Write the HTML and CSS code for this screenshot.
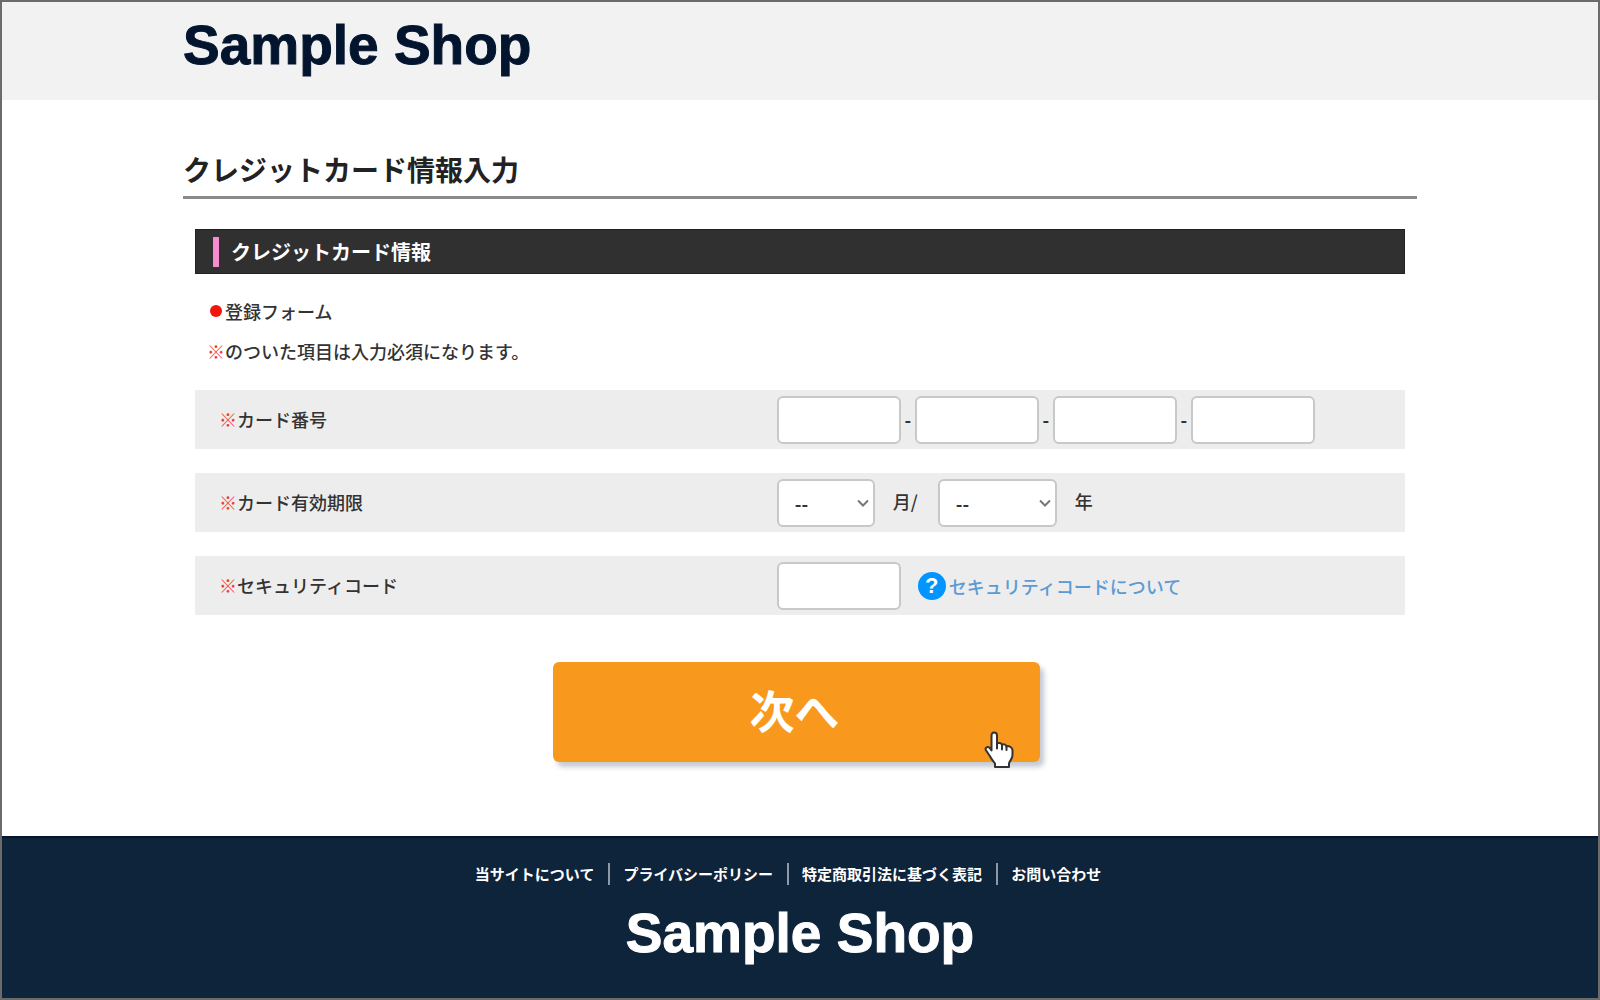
FILE: index.html
```html
<!DOCTYPE html>
<html lang="ja">
<head>
  <meta charset="UTF-8" />
  <title>クレジットカード情報入力 | Sample Shop</title>
  <meta name="viewport" content="width=device-width, initial-scale=1.0"/>
  <link rel="stylesheet" href="styles.css">
</head>
<body>
  <!-- ヘッダー -->
  <header class="header">
    <div class="inner"><div class="logo">Sample Shop</div></div>
  </header>

  <!-- メイン -->
  <main class="inner main">
    <h1 class="page-title">クレジットカード情報入力</h1>

    <form class="card-form" onsubmit="return false">
      <h2 class="section-title">クレジットカード情報</h2>

      <div class="notes">
        <p class="note"><span class="dot"></span>登録フォーム</p>
        <p class="note"><span class="req">※</span>のついた項目は入力必須になります。</p>
      </div>

      <div class="row">
        <label class="row-label" for="card1" id="cardLabel"><span class="req">※</span>カード番号</label>
        <div class="row-body">
          <input class="box" type="text" id="card1" maxlength="4" inputmode="numeric">
          <span class="hyphen">-</span>
          <input class="box" type="text" id="card2" maxlength="4" inputmode="numeric" aria-labelledby="cardLabel">
          <span class="hyphen">-</span>
          <input class="box" type="text" id="card3" maxlength="4" inputmode="numeric" aria-labelledby="cardLabel">
          <span class="hyphen">-</span>
          <input class="box" type="text" id="card4" maxlength="4" inputmode="numeric" aria-labelledby="cardLabel">
        </div>
      </div>

      <div class="row">
        <label class="row-label" for="month"><span class="req">※</span>カード有効期限</label>
        <div class="row-body">
          <span class="select-wrap">
            <select class="box select-month" id="month"><option>--</option></select>
            <svg class="chevron" viewBox="0 0 12 8"><path d="M1 1.5l5 5 5-5"/></svg>
          </span>
          <label class="unit" for="month">月/</label>
          <span class="select-wrap">
            <select class="box select-year" id="year"><option>--</option></select>
            <svg class="chevron" viewBox="0 0 12 8"><path d="M1 1.5l5 5 5-5"/></svg>
          </span>
          <label class="unit" for="year">年</label>
        </div>
      </div>

      <div class="row">
        <label class="row-label" for="code"><span class="req">※</span>セキュリティコード</label>
        <div class="row-body">
          <input class="box" type="text" id="code" maxlength="4" inputmode="numeric">
          <a class="help" href="#"><span class="help-icon">?</span>セキュリティコードについて</a>
        </div>
      </div>

      <div class="submit-row">
        <div class="submit-area">
          <button class="submit" type="submit">次へ</button>
          <svg class="pointer" viewBox="0 0 30 39">
            <path d="M10 2.500C11.800 2.500 13 3.700 13 5.500V14C13.500 12.600 17.500 12.500 18 15C19 13.800 22 14 22.500 16.500C24 15.500 28 16.500 28.500 20V25C28.500 29 25.500 31 25 33.500V37H11V33.500C9 31 7 28.500 5.500 25.500L1.800 20C0.800 17.500 3.800 16 5.500 17.700L7.500 20.500V5.500C7.500 3.700 8.500 2.500 10 2.500Z"/>
            <path d="M13 13.500V18.500M18 15V19.500M22.500 16.500V20"/>
          </svg>
        </div>
      </div>
    </form>
  </main>

  <!-- フッター -->
  <footer class="footer">
    <nav class="footer-nav">
      <a href="#">当サイトについて</a>
      <a href="#">プライバシーポリシー</a>
      <a href="#">特定商取引法に基づく表記</a>
      <a href="#">お問い合わせ</a>
    </nav>
    <div class="logo">Sample Shop</div>
  </footer>
</body>
</html>
```
FILE: styles.css
```css
/* ========== 共通 ========== */
*{box-sizing:border-box;}
body{
  margin:0;min-height:100vh;display:flex;flex-direction:column;
  border:2px solid #6b6b6b;background:#fff;color:#333;
  font-family:"Noto Sans CJK JP", sans-serif;font-size:18px;font-weight:500;line-height:24px;
}
h1,h2,p{margin:0;}
a{text-decoration:none;}
.inner{width:100%;max-width:1234px;margin:0 auto;}
.logo{
  font-family:"Liberation Sans", Arial, sans-serif;font-size:55px;font-weight:bold;line-height:60px;
  color:#03152e;-webkit-text-stroke:1px currentColor;
}
.req{color:#f33b32;}

/* ========== ヘッダー ========== */
.header{background:#f2f2f2;padding:13px 0 25px;}

/* ========== メイン ========== */
.main{flex:1 0 auto;padding-top:49px;}
.page-title{
  font-size:28px;line-height:40px;font-weight:700;color:#222;
  padding-bottom:7px;border-bottom:3px solid #8a8a8a;
}
.card-form{padding:30px 12px 0;}
.section-title{
  display:flex;align-items:center;gap:12px;height:45px;padding-left:17px;
  background:#303030;border:1px solid #222;color:#fff;font-size:20px;font-weight:700;
}
.section-title::before{content:"";width:6px;height:30px;background:#f78bd0;}
.notes{padding:25px 12px 27px;display:grid;gap:16px;}
.note{display:flex;align-items:center;}
.dot{width:12px;height:12px;margin:0 3px;border-radius:50%;background:#f4140c;}

/* 入力行 */
.row{display:flex;align-items:center;min-height:59px;margin-bottom:24px;background:#ededed;}
.row-label{width:48%;padding:0 0 2px 24px;}
.row-body{display:flex;align-items:center;padding-left:1px;}
.box{
  width:124px;height:48px;padding:0 16px;border:2px solid #c8c8c8;border-radius:6px;
  background:#fff;color:#333;font:inherit;
}
.hyphen{width:14px;padding-bottom:2px;text-align:center;font-weight:700;}
.select-wrap{position:relative;display:flex;}
.select-wrap .box{appearance:none;font-weight:700;}
.box.select-month{width:98px;}
.box.select-year{width:119px;}
.chevron{
  position:absolute;right:6px;top:20px;width:12px;height:8px;
  fill:none;stroke:#777;stroke-width:2;pointer-events:none;
}
.unit{padding:0 20px 4px 18px;}
.help{display:flex;align-items:center;gap:3px;margin-left:17px;color:#5b9bd5;}
.help-icon{
  width:28px;height:28px;border-radius:50%;background:#0095ff;color:#fff;
  font-family:"Liberation Sans", Arial, sans-serif;font-size:22px;font-weight:bold;line-height:28px;text-align:center;
}

/* 次へボタン */
.submit-row{display:flex;justify-content:center;padding:23px 7px 72px 0;}
.submit-area{position:relative;width:487px;}
.submit{
  display:block;width:100%;height:100px;padding:0 4px 4px 0;border:0;border-radius:6px;
  background:#f8991d;box-shadow:4px 5px 5px rgba(60,80,110,.3);
  color:#fff;font-family:inherit;font-size:45px;font-weight:700;line-height:60px;cursor:pointer;
}
.pointer{
  position:absolute;right:26px;bottom:-7px;width:30px;height:39px;
  fill:#fff;stroke:#333;stroke-width:2;stroke-linejoin:round;stroke-linecap:round;pointer-events:none;
}

/* ========== フッター ========== */
.footer{
  display:flex;flex-direction:column;align-items:center;gap:18px;
  padding:25px 0 35px;border-top:2px solid #03142b;background:#0e243b;
}
.footer-nav{display:flex;padding-right:24px;line-height:22px;}
.footer-nav a{color:#fff;font-size:15px;font-weight:700;}
.footer-nav a + a{margin-left:14px;padding-left:13px;border-left:2px solid #8d99a8;}
.footer .logo{color:#fff;}
```
